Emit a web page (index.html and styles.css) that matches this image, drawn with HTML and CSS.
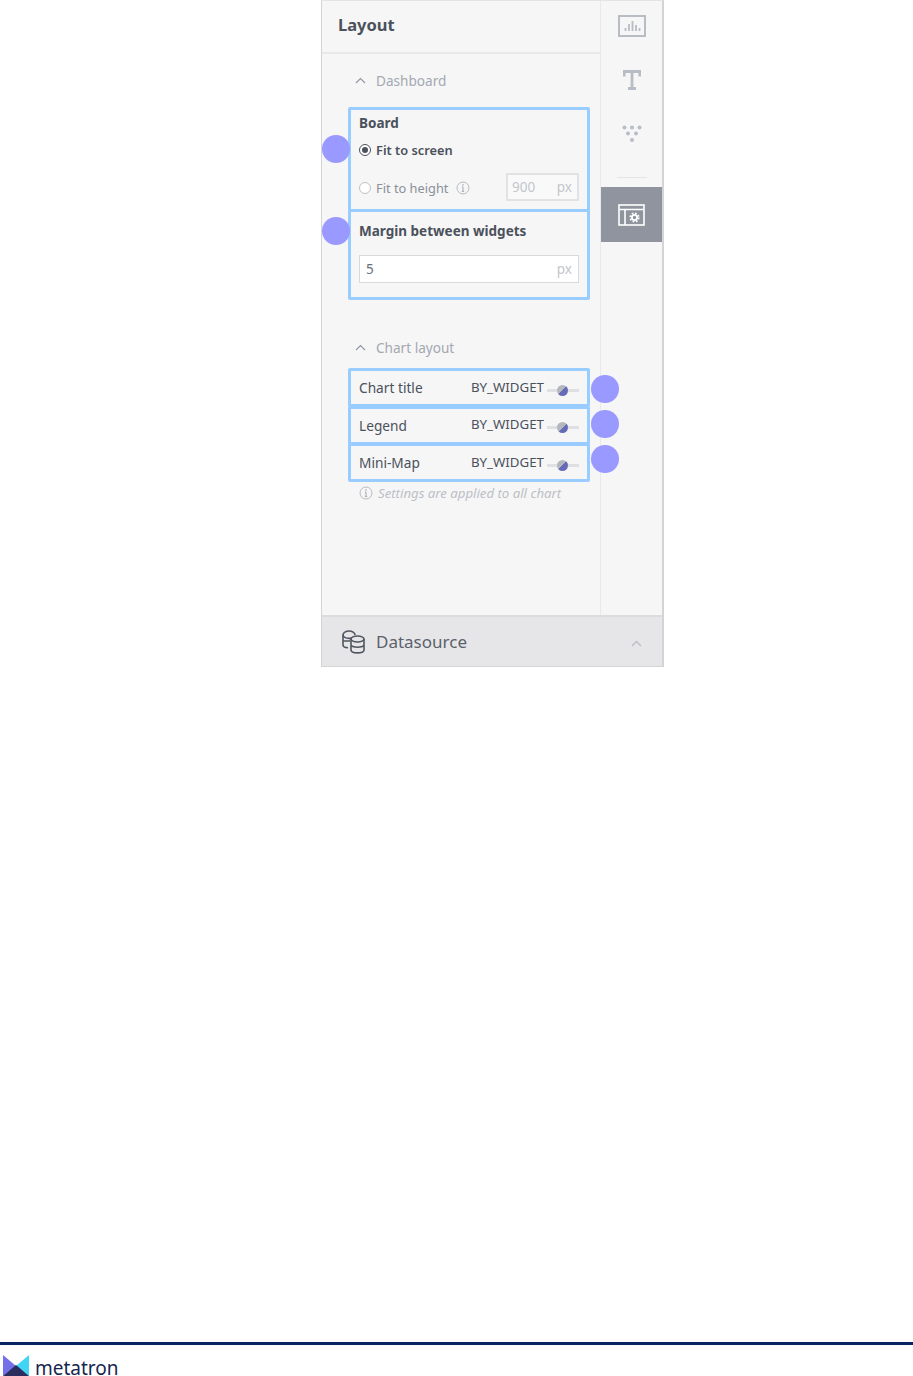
FILE: index.html
```html
<!DOCTYPE html>
<html lang="en">
<head>
    <meta charset="UTF-8">
    <title>Layout</title>
    <link rel="stylesheet" href="styles.css">
</head>
<body>
    <div class="page">
        <div class="panel">
            <div class="panel-body">
                <div class="main">
                    <div class="main-title">Layout</div>

                    <div class="section-title section-first">
                        <svg class="chevron" width="11" height="7" viewBox="0 0 11 7"><path d="M1 6l4.500-4.500L10 6" fill="none" stroke="#90969f" stroke-width="1.100"/></svg>
                        <span>Dashboard</span>
                    </div>

                    <div class="mark mark-board">
                        <span class="dot dot-left dot-board"></span>
                        <div class="opt-title">Board</div>
                        <div class="radio-row radio-on">
                            <span class="radio"></span>
                            <span>Fit to screen</span>
                        </div>
                        <div class="radio-row radio-off">
                            <span class="radio"></span>
                            <span class="radio-text">Fit to height</span>
                            <svg class="info" width="14" height="14" viewBox="0 0 14 14"><circle cx="7" cy="7" r="6" fill="none" stroke="#b7bbc2"/><path d="M7 6v4.200M5.800 10.400h2.400M6 6h1" fill="none" stroke="#a3a7af"/><circle cx="7" cy="4" r=".8" fill="#a3a7af"/></svg>
                            <div class="field field-small">
                                <span class="field-value muted">900</span>
                                <span class="px">px</span>
                            </div>
                        </div>
                    </div>

                    <div class="mark mark-margin">
                        <span class="dot dot-left dot-margin"></span>
                        <div class="opt-title">Margin between widgets</div>
                        <div class="field field-wide">
                            <span class="field-value">5</span>
                            <span class="px">px</span>
                        </div>
                    </div>

                    <div class="section-title section-second">
                        <svg class="chevron" width="11" height="7" viewBox="0 0 11 7"><path d="M1 6l4.500-4.500L10 6" fill="none" stroke="#90969f" stroke-width="1.100"/></svg>
                        <span>Chart layout</span>
                    </div>

                    <div class="mark mark-row">
                        <span class="row-label">Chart title</span>
                        <span class="row-value">BY_WIDGET</span>
                        <span class="slider"><span class="knob"></span></span>
                        <span class="dot dot-right"></span>
                    </div>
                    <div class="mark mark-row">
                        <span class="row-label">Legend</span>
                        <span class="row-value">BY_WIDGET</span>
                        <span class="slider"><span class="knob"></span></span>
                        <span class="dot dot-right dot-up1"></span>
                    </div>
                    <div class="mark mark-row">
                        <span class="row-label">Mini-Map</span>
                        <span class="row-value">BY_WIDGET</span>
                        <span class="slider"><span class="knob"></span></span>
                        <span class="dot dot-right dot-up2"></span>
                    </div>

                    <div class="hint">
                        <svg class="info" width="14" height="14" viewBox="0 0 14 14"><circle cx="7" cy="7" r="6" fill="none" stroke="#b7bbc2"/><path d="M7 6v4.200M5.800 10.400h2.400M6 6h1" fill="none" stroke="#a3a7af"/><circle cx="7" cy="4" r=".8" fill="#a3a7af"/></svg>
                        <span>Settings are applied to all chart</span>
                    </div>
                </div>

                <div class="rail">
                    <div class="rail-item rail-chart">
                        <svg width="28" height="22" viewBox="0 0 28 22"><rect x="1" y="1" width="26" height="20" fill="none" stroke="#b8bcc4" stroke-width="2"/><path d="M7.500 16v-3M11 16V9M14.500 16V6M18 16v-6M21.500 16v-3" fill="none" stroke="#b8bcc4" stroke-width="1.800"/></svg>
                    </div>
                    <div class="rail-item rail-text">
                        <svg width="18" height="20" viewBox="0 0 18 20"><path d="M1.200 6.500V1.500h15.600v5M9 1.500V18.500M5 18.500h8" fill="none" stroke="#b8bcc4" stroke-width="2.800"/></svg>
                    </div>
                    <div class="rail-item rail-dots">
                        <svg width="20" height="18" viewBox="0 0 20 18" fill="#b8bcc4"><circle cx="2.500" cy="2.500" r="2"/><circle cx="10" cy="2.500" r="2"/><circle cx="17.500" cy="2.500" r="2"/><circle cx="6" cy="8.500" r="2"/><circle cx="14" cy="8.500" r="2"/><circle cx="10" cy="15" r="2"/></svg>
                    </div>
                    <div class="rail-divider"></div>
                    <div class="rail-item rail-active">
                        <svg width="27" height="22" viewBox="0 0 27 22"><rect x="1" y="1" width="25" height="20" fill="none" stroke="#fff" stroke-width="1.600"/><path d="M1 5.500h25M7 5.500V21" fill="none" stroke="#fff" stroke-width="1.600"/><circle cx="16.500" cy="13.500" r="4.300" fill="none" stroke="#fff" stroke-width="1.600" stroke-dasharray="1.800 1.580"/><circle cx="16.500" cy="13.500" r="2.600" fill="none" stroke="#fff" stroke-width="1.800"/></svg>
                    </div>
                </div>
            </div>

            <div class="panel-foot">
                <svg class="db-icon" width="24" height="24" viewBox="0 0 24 24" fill="none" stroke="#50565f" stroke-width="1.600">
                    <path d="M13 5C13 2.800 10 1 7 1S1 2.800 1 5v10c0 1.800 2.200 2.700 5 2.800"/>
                    <path d="M1 5c0 1.900 2.800 3.400 6 3.400 1 0 1.600-.1 2.400-.3M1 11h7"/>
                    <ellipse cx="15.500" cy="9" rx="6.500" ry="3"/>
                    <path d="M9 9v11c0 1.800 3 2.900 6.500 2.900S22 21.800 22 20V9M9 15.500c1.200 1.200 3.800 1.700 6.500 1.700s5.300-.5 6.500-1.700"/>
                </svg>
                <span class="foot-label">Datasource</span>
                <svg class="foot-chevron" width="11" height="7" viewBox="0 0 11 7"><path d="M1 6l4.500-4.500L10 6" fill="none" stroke="#bcbfc4" stroke-width="1.400"/></svg>
            </div>
        </div>

        <div class="brand">
            <svg class="brand-logo" width="26" height="21" viewBox="0 0 26 21">
                <path d="M0 0l13 11L0 21z" fill="#7471e8"/>
                <path d="M26 0L13 11l13 10z" fill="#41d5f5"/>
                <path d="M0 21l13-11 13 11z" fill="#2a2d5e"/>
            </svg>
            <span class="brand-name">metatron</span>
        </div>
    </div>
</body>
</html>
```

FILE: styles.css
```css
:root {
    --mark-color: #99ccff;
    --dot-color: #9999ff;
    --text-dark: #4b515b;
    --text-muted: #a4a8b0;
    --line-color: #e9e9eb;
}

* {
    box-sizing: border-box;
}

body {
    margin: 0;
    background: #fff;
    font-family: "Noto Sans", "Liberation Sans", sans-serif;
    color: var(--text-dark);
}

.page {
    display: flex;
    flex-direction: column;
    justify-content: space-between;
    height: 1376px;
    overflow: hidden;
}

.panel {
    width: 343px;
    height: 667px;
    margin-left: 321px;
    display: flex;
    flex-direction: column;
    background: #f6f6f7;
    border: 1px solid #d4d4d6;
    border-top: 1px solid #e4e4e6;
    border-right-width: 2px;
}

.panel-body {
    flex: 1;
    display: flex;
    min-height: 0;
}

.main {
    width: 279px;
    border-right: 1px solid var(--line-color);
}

.main-title {
    height: 53px;
    padding: 12px 16px 0;
    border-bottom: 2px solid var(--line-color);
    font-size: 16.500px;
    font-weight: 700;
    line-height: 24px;
}

.section-title {
    display: flex;
    align-items: center;
    gap: 10px;
    height: 20px;
    padding-left: 33px;
    font-size: 13.600px;
    color: var(--text-muted);
}

.section-first {
    margin-top: 16px;
}

.section-second {
    margin-top: 37px;
    margin-bottom: 11px;
}

.mark {
    position: relative;
    width: 242px;
    margin-left: 26px;
    border: 3px solid var(--mark-color);
    border-radius: 2px;
}

.mark-board {
    height: 105px;
    margin-top: 17px;
    padding: 3px 8px 0;
}

.mark-margin {
    height: 91px;
    margin-top: -3px;
    padding: 9px 8px 0;
}

.mark-row {
    display: flex;
    align-items: center;
    height: 39px;
    margin-bottom: -1.500px;
    padding: 0 8px;
    font-size: 13.700px;
}

.opt-title {
    font-size: 13.500px;
    font-weight: 700;
    line-height: 20px;
}

.radio-row {
    display: flex;
    align-items: center;
    font-size: 12.800px;
}

.radio-on {
    height: 20px;
    margin-top: 7px;
    font-weight: 600;
}

.radio-off {
    margin-top: 13px;
    height: 28px;
    color: #8b9099;
}

.radio-text {
    margin-top: 2px;
}

.radio {
    position: relative;
    width: 12px;
    height: 12px;
    margin-right: 5px;
    border: 1px solid #bcc0c7;
    border-radius: 50%;
    background: #fff;
}

.radio-off .radio {
    margin-top: 2px;
}

.radio-on .radio {
    border-color: var(--text-dark);
}

.radio-on .radio::after {
    content: "";
    position: absolute;
    top: 2px;
    left: 2px;
    width: 6px;
    height: 6px;
    border-radius: 50%;
    background: var(--text-dark);
}

.info {
    flex: none;
}

.radio-off .info {
    margin: 2px 0 0 8px;
}

.field {
    display: flex;
    align-items: center;
    justify-content: space-between;
    height: 28px;
    padding: 0 6px;
    background: #fff;
    border: 1px solid #d8d9dc;
    font-size: 13.500px;
}

.field-small {
    width: 73px;
    margin-left: auto;
    background: #f9f9fa;
    border: 2px solid #e1e2e4;
    padding: 0 5px 0 4px;
}

.field-wide {
    width: 220px;
    margin-top: 14px;
}

.field-value {
    color: #6a6f78;
}

.muted {
    color: #c3c6cb;
}

.px {
    color: #c3c6cb;
}

.row-label {
    flex: 1;
}

.row-value {
    font-size: 13.300px;
    margin-top: -2px;
}

.slider {
    position: relative;
    flex: none;
    width: 32px;
    height: 3px;
    margin-left: 3px;
    margin-top: 5px;
    background: #dfe0e3;
}

.knob {
    position: absolute;
    top: -4px;
    left: 10px;
    width: 11px;
    height: 11px;
    border-radius: 50%;
    background: linear-gradient(135deg, #b4b7be 50%, #666bb8 50%);
}

.dot {
    position: absolute;
    width: 28px;
    height: 28px;
    border-radius: 50%;
    background: var(--dot-color);
}

.dot-left {
    left: -29px;
}

.dot-board {
    top: 25px;
}

.dot-margin {
    top: 5px;
}

.dot-right {
    right: -32px;
    top: 4px;
}

.dot-up1 {
    top: 1.500px;
}

.dot-up2 {
    top: -1px;
}

.hint {
    display: flex;
    align-items: center;
    gap: 5px;
    margin: 3.500px 0 0 37px;
    font-size: 13.200px;
    line-height: 18px;
    font-style: italic;
    color: #bcbfc5;
}

.rail {
    flex: 1;
    display: flex;
    flex-direction: column;
}

.rail-item {
    display: flex;
    align-items: center;
    justify-content: center;
}

.rail-chart {
    height: 50px;
}

.rail-text {
    height: 58px;
}

.rail-dots {
    height: 50px;
}

.rail-divider {
    width: 30px;
    height: 1px;
    margin: 18px auto 9px;
    background: #e4e4e6;
}

.rail-active {
    height: 55px;
    background: #8f949e;
}

.panel-foot {
    display: flex;
    align-items: center;
    height: 51px;
    padding: 0 20px;
    background: #e6e6e8;
    border-top: 2px solid #dcdcde;
}

.db-icon {
    margin-right: 10px;
}

.foot-label {
    flex: 1;
    font-size: 17px;
    color: #5b616b;
}

.foot-chevron {
    margin-top: 3px;
}

.brand {
    height: 34px;
    padding: 10px 0 0 3px;
    border-top: 3px solid #0a2463;
    display: flex;
    gap: 6px;
}

.brand-logo {
    flex: none;
}

.brand-name {
    margin-top: 5px;
    font-size: 19px;
    line-height: 16px;
    color: #16264f;
}
```
